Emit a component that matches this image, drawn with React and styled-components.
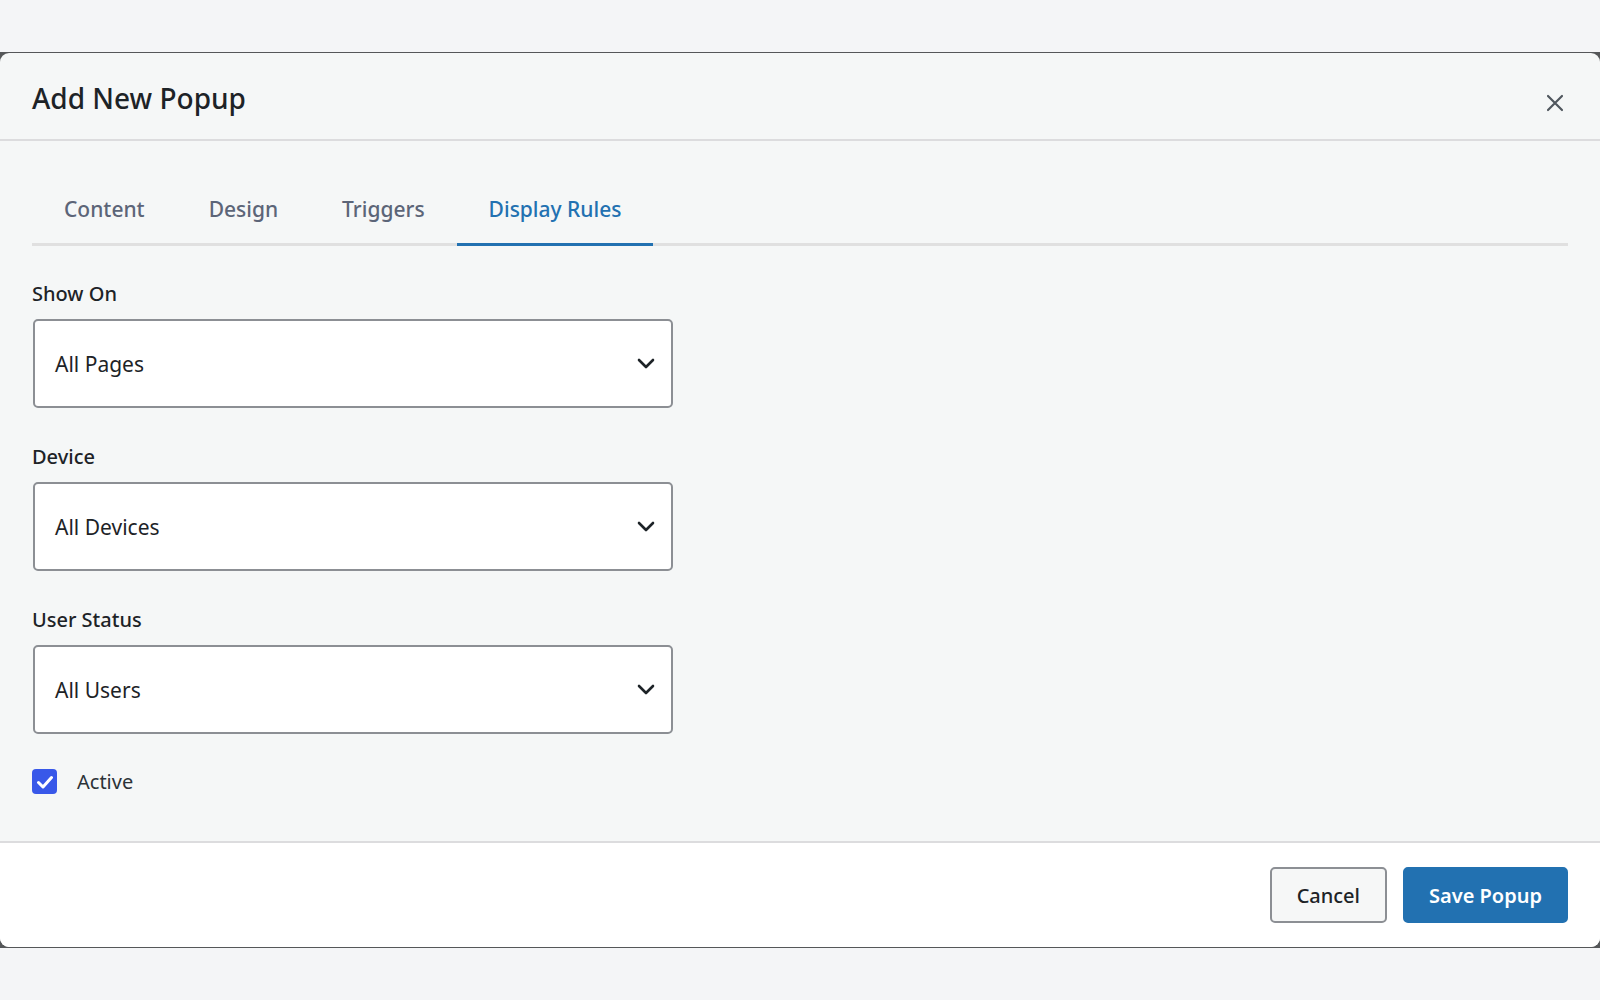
import { useState } from "react";
import styled, { createGlobalStyle } from "styled-components";

const GlobalStyle = createGlobalStyle`
  html, body {
    margin: 0;
    padding: 0;
    background: #f4f5f7;
    font-family: "Noto Sans", "Open Sans", Arial, sans-serif;
    color: #1d2327;
  }
  * { box-sizing: border-box; }
`;

const Backdrop = styled.div`
  margin-top: 52px;
  height: 896px;
  padding: 1px 0;
  background: #555759;
`;

const Modal = styled.div`
  height: 100%;
  display: flex;
  flex-direction: column;
  background: #f5f7f7;
  border-radius: 9px;
  overflow: hidden;
`;

const Header = styled.div`
  height: 88px;
  display: flex;
  align-items: center;
  justify-content: space-between;
  padding: 0 32px 0 32px;
  border-bottom: 2px solid #dcdcde;
`;

const Title = styled.h2`
  margin: 0;
  padding-top: 4px;
  font-size: 28px;
  font-weight: 500;
  color: #1d2327;
`;

const CloseButton = styled.button`
  border: 0;
  background: none;
  padding: 4px;
  margin-top: 14px;
  cursor: pointer;
  display: flex;
  color: #50575e;
`;

const Body = styled.div`
  flex: 1;
  padding: 32px 32px 0;
`;

const TabList = styled.div`
  display: flex;
  border-bottom: 3px solid #e0e0e0;
`;

const Tab = styled.button`
  border: 0;
  background: none;
  font-family: inherit;
  font-size: 21px;
  font-weight: 500;
  padding: 22px 32px 20px;
  margin-bottom: -3px;
  color: ${(p) => (p.$active ? "#2271b1" : "#5c6578")};
  border-bottom: 3px solid ${(p) => (p.$active ? "#2271b1" : "transparent")};
  cursor: pointer;
`;

const Form = styled.div`
  padding-top: 36px;
  display: flex;
  flex-direction: column;
  gap: 37px;
`;

const Field = styled.div`
  display: flex;
  flex-direction: column;
  gap: 13px;
`;

const Label = styled.label`
  font-size: 20px;
  line-height: 24px;
  font-weight: 500;
  color: #1d2327;
`;

const SelectBox = styled.div`
  width: 640px;
  height: 89px;
  margin-left: 1px;
  display: flex;
  align-items: center;
  justify-content: space-between;
  padding: 0 16px 0 20px;
  background: #fff;
  border: 2px solid #8c8f94;
  border-radius: 5px;
  font-size: 21px;
  color: #1d2327;
`;

const CheckRow = styled.label`
  display: flex;
  align-items: center;
  gap: 20px;
  margin-top: -3px;
  font-size: 20px;
  color: #2c3338;
`;

const CheckBox = styled.span`
  width: 25px;
  height: 25px;
  border-radius: 4px;
  background: #3858e9;
  display: flex;
  align-items: center;
  justify-content: center;
`;

const Footer = styled.div`
  display: flex;
  justify-content: flex-end;
  gap: 16px;
  padding: 24px 32px;
  background: #fff;
  border-top: 2px solid #dcdcde;
`;

const Button = styled.button`
  height: 56px;
  padding: 0 ${(p) => (p.$primary ? "24px" : "25px")};
  font-family: inherit;
  font-size: 20px;
  font-weight: ${(p) => (p.$primary ? 600 : 500)};
  border-radius: 5px;
  cursor: pointer;
  border: 2px solid ${(p) => (p.$primary ? "#2271b1" : "#8c8f94")};
  background: ${(p) => (p.$primary ? "#2271b1" : "#f6f7f7")};
  color: ${(p) => (p.$primary ? "#fff" : "#1d2327")};
`;

const Chevron = () => (
  <svg width="18" height="11" viewBox="0 0 18 11" fill="none">
    <path d="M2 2l7 7 7-7" stroke="#1d2327" strokeWidth="2.6" strokeLinecap="round" strokeLinejoin="round" />
  </svg>
);

const fields = [
  { label: "Show On", value: "All Pages" },
  { label: "Device", value: "All Devices" },
  { label: "User Status", value: "All Users" },
];

const tabs = ["Content", "Design", "Triggers", "Display Rules"];

export default function App() {
  const [active, setActive] = useState("Display Rules");
  return (
    <>
      <GlobalStyle />
      <Backdrop>
        <Modal>
          <Header>
            <Title>Add New Popup</Title>
            <CloseButton aria-label="Close">
              <svg width="18" height="18" viewBox="0 0 18 18">
                <path d="M2 2l14 14M16 2L2 16" stroke="#50575e" strokeWidth="2.2" strokeLinecap="round" />
              </svg>
            </CloseButton>
          </Header>
          <Body>
            <TabList>
              {tabs.map((t) => (
                <Tab key={t} $active={t === active} onClick={() => setActive(t)}>
                  {t}
                </Tab>
              ))}
            </TabList>
            <Form>
              {fields.map((f) => (
                <Field key={f.label}>
                  <Label>{f.label}</Label>
                  <SelectBox>
                    {f.value}
                    <Chevron />
                  </SelectBox>
                </Field>
              ))}
              <CheckRow>
                <CheckBox>
                  <svg width="18" height="14" viewBox="0 0 18 14">
                    <path d="M2.5 7.5l4.5 4.5L15.5 2.5" stroke="#fff" strokeWidth="3" fill="none" strokeLinecap="round" strokeLinejoin="round" />
                  </svg>
                </CheckBox>
                Active
              </CheckRow>
            </Form>
          </Body>
          <Footer>
            <Button>Cancel</Button>
            <Button $primary>Save Popup</Button>
          </Footer>
        </Modal>
      </Backdrop>
    </>
  );
}
